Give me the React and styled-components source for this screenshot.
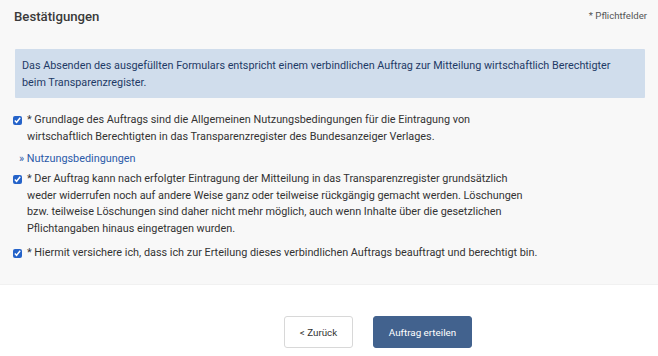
import React from "react";
import styled, { createGlobalStyle } from "styled-components";

const Global = createGlobalStyle`
  html, body { margin: 0; padding: 0; background: #fff; }
  body { font-family: Roboto, "Liberation Sans", Arial, sans-serif; color: #333; }
`;

const Panel = styled.section`
  background: #f8f8f8;
  padding: 0 13px 0 14px;
  height: 285px;
  box-sizing: border-box;
  border-bottom: 1px solid #f1f1f1;
`;

const Header = styled.div`
  display: flex;
  justify-content: space-between;
  align-items: flex-start;
  height: 49px;
`;

const Title = styled.h2`
  margin: 8px 0 0 0;
  font-size: 13.2px;
  font-weight: 500;
  color: #3a3a3a;
  line-height: 18px;
`;

const Required = styled.span`
  margin: 10px -2px 0 0;
  font-size: 9.6px;
  line-height: 12px;
  color: #555;
`;

const Info = styled.div`
  background: #d0ddec;
  color: #1e3a66;
  font-size: 10.8px;
  line-height: 17px;
  padding: 8px 8px 7px 7px;
  margin-left: 1px;
  border-radius: 1px;
`;

const List = styled.div`
  display: flex;
  flex-direction: column;
  margin-top: 14px;
`;

const Row = styled.label`
  display: flex;
  align-items: flex-start;
  font-size: 10.85px;
  line-height: 16.5px;
  color: #333;
  margin-top: ${(p) => p.$mt || 0}px;
  white-space: nowrap;
`;

const Box = styled.input.attrs({ type: "checkbox" })`
  width: 9px;
  height: 9px;
  margin: 4px 5px 0 -1px;
  flex: none;
  accent-color: #2563c9;
`;

const Link = styled.a`
  font-size: 10.85px;
  line-height: 16px;
  color: #2b5aa8;
  text-decoration: none;
  margin: 6px 0 0 5px;
`;

const Footer = styled.div`
  display: flex;
  justify-content: center;
  gap: 20px;
  padding: 31px 0 0 98px;
`;

const Button = styled.button`
  height: 32px;
  width: ${(p) => (p.$primary ? 99 : 69)}px;
  padding: 0;
  border-radius: 3px;
  font-family: Roboto, "Liberation Sans", Arial, sans-serif;
  font-size: 9.8px;
  cursor: pointer;
  background: ${(p) => (p.$primary ? "#42628e" : "#fff")};
  color: ${(p) => (p.$primary ? "#fff" : "#333")};
  border: 1px solid ${(p) => (p.$primary ? "#42628e" : "#d8d8d8")};
`;

export default function App() {
  return (
    <>
      <Global />
      <Panel>
        <Header>
          <Title>Bestätigungen</Title>
          <Required>* Pflichtfelder</Required>
        </Header>
        <Info>
          Das Absenden des ausgefüllten Formulars entspricht einem verbindlichen Auftrag zur Mitteilung wirtschaftlich Berechtigter
          <br />
          beim Transparenzregister.
        </Info>
        <List>
          <Row>
            <Box defaultChecked />
            <span>
              * Grundlage des Auftrags sind die Allgemeinen Nutzungsbedingungen für die Eintragung von
              <br />
              wirtschaftlich Berechtigten in das Transparenzregister des Bundesanzeiger Verlages.
            </span>
          </Row>
          <Link href="#">» Nutzungsbedingungen</Link>
          <Row $mt={4}>
            <Box defaultChecked />
            <span>
              * Der Auftrag kann nach erfolgter Eintragung der Mitteilung in das Transparenzregister grundsätzlich
              <br />
              weder widerrufen noch auf andere Weise ganz oder teilweise rückgängig gemacht werden. Löschungen
              <br />
              bzw. teilweise Löschungen sind daher nicht mehr möglich, auch wenn Inhalte über die gesetzlichen
              <br />
              Pflichtangaben hinaus eingetragen wurden.
            </span>
          </Row>
          <Row $mt={8}>
            <Box defaultChecked />
            <span>
              * Hiermit versichere ich, dass ich zur Erteilung dieses verbindlichen Auftrags beauftragt und berechtigt bin.
            </span>
          </Row>
        </List>
      </Panel>
      <Footer>
        <Button>&lt; Zurück</Button>
        <Button $primary>Auftrag erteilen</Button>
      </Footer>
    </>
  );
}
